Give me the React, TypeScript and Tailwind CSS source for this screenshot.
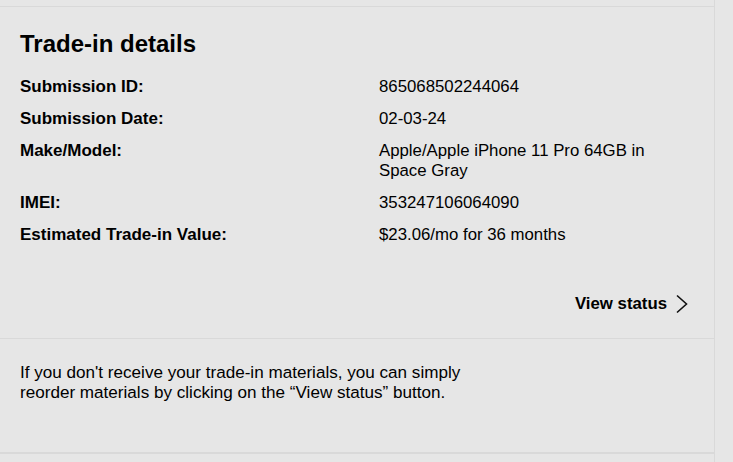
const rows: { label: string; value: string }[] = [
  { label: 'Submission ID:', value: '865068502244064' },
  { label: 'Submission Date:', value: '02-03-24' },
  { label: 'Make/Model:', value: 'Apple/Apple iPhone 11 Pro 64GB in Space Gray' },
  { label: 'IMEI:', value: '353247106064090' },
  { label: 'Estimated Trade-in Value:', value: '$23.06/mo for 36 months' },
];

function Chevron() {
  return (
    <svg width="13" height="20" viewBox="0 0 13 20" fill="none" className="block">
      <path d="M2 1.5 L11.5 10 L2 18.5" stroke="#111" strokeWidth="1.6" strokeLinejoin="miter" />
    </svg>
  );
}

export default function App() {
  return (
    <div className="min-h-screen w-full bg-[#e6e6e6] text-black font-['Liberation_Sans',Arial,sans-serif]">
      <div className="min-h-screen w-[715px] border-r border-[#d9d9d9] pt-[6px]">
        <section className="border-t border-b-2 border-[#d9d9d9]">
          <div className="px-[20px] pt-[23px]">
            <h2 className="text-[24px] leading-[28px] font-bold">Trade-in details</h2>

            <div className="mt-[19px] flex flex-col gap-[12px]">
              {rows.map((row) => (
                <div key={row.label} className="grid grid-cols-[359px_300px]">
                  <span className="text-[17px] leading-[20px] font-bold">{row.label}</span>
                  <span className="text-[16.8px] leading-[20px]">{row.value}</span>
                </div>
              ))}
            </div>

            <div className="mt-[48px] pb-[23px] flex justify-end pr-[6px]">
              <button className="flex items-center gap-[8px] text-[16.8px] leading-[22px] font-bold">
                View status
                <Chevron />
              </button>
            </div>
          </div>

          <div className="border-t border-[#d9d9d9] px-[20px] pt-[24px] pb-[49px]">
            <p className="w-[460px] text-[17.1px] leading-[20px]">
              If you don't receive your trade-in materials, you can simply reorder materials by
              clicking on the “View status” button.
            </p>
          </div>
        </section>
      </div>
    </div>
  );
}
